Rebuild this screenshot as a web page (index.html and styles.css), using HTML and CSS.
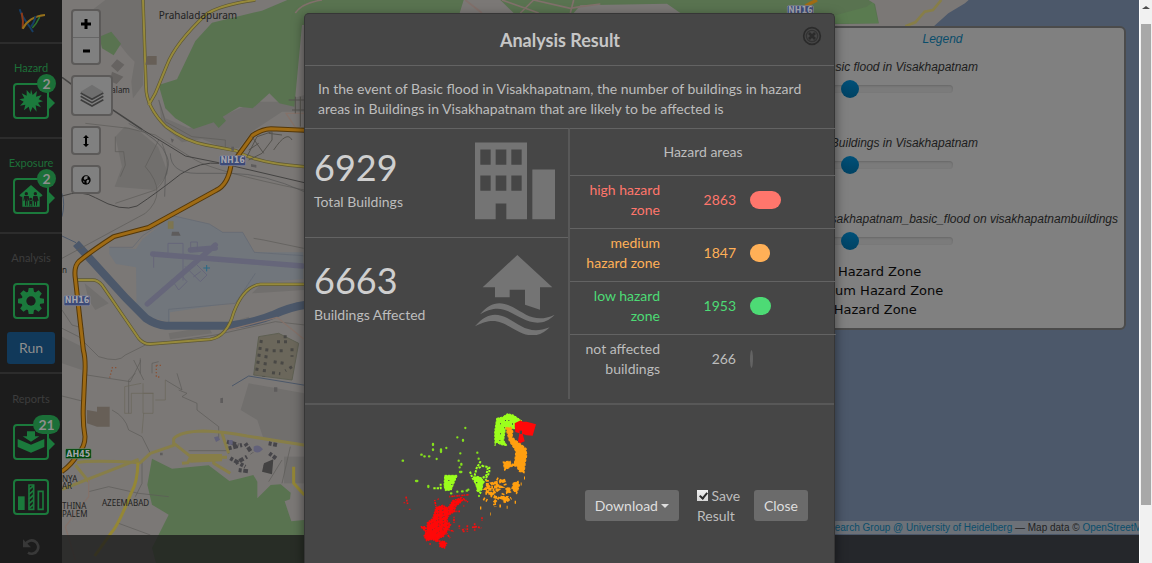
FILE: index.html
```html
<!DOCTYPE html>
<html lang="en">
<head>
<meta charset="utf-8">
<title>Analysis Result</title>
<link rel="stylesheet" href="styles.css">
</head>
<body>
<div class="app">
  <nav class="sidebar">
    <a class="brand" href="#" aria-label="Home">
      <svg width="28" height="26" viewBox="0 0 84 78" fill="none" stroke-width="6"><path d="M8 4C16 32 32 44 48 72" stroke="#163d63"/><path d="M14 14C18 30 19 46 17 62" stroke="#8d3a17"/><path d="M17 62C30 38 50 24 84 21" stroke="#95701b"/><path d="M56 24C52 40 47 50 42 56" stroke="#163d63"/><path d="M46 60C54 52 62 40 68 27" stroke="#2e7331" stroke-width="5"/></svg>
    </a>
    <section class="step">
      <h2 class="step-title on">Hazard</h2>
      <button class="tile arrow" aria-label="Hazard layers"><svg width="24" height="24" viewBox="0 0 72 72" fill="#1b7a3c"><path d="M36 1l5 17 13-12-3 17 17-5-9 13 13 6-15 4 9 14-16-6 3 19-12-14-7 16-5-17-14 11 4-17-16 3 11-12-13-7 15-3-8-15 15 7 0-17 11 12z"/></svg><span class="badge">2</span></button>
    </section>
    <section class="step">
      <h2 class="step-title on">Exposure</h2>
      <button class="tile arrow" aria-label="Exposure layers"><svg width="24" height="24" viewBox="0 0 72 72"><path fill="#1b7a3c" d="M36 3L1 34l5 4h4v30h52V38h4l5-4z"/><g fill="#1c1c1c"><circle cx="22" cy="29" r="5"/><path d="M15 36h14l3 14h-4l-2-7v22h-3V52h-2v13h-3V43l-2 7h-3z"/><circle cx="49" cy="29" r="5"/><path d="M43 36h12l4 14h-4l-1 15h-3V53h-3v12h-3l-1-15h-4z"/><circle cx="35" cy="45" r="4"/><path d="M31 50h9v17h-3v-7h-3v7h-3z"/></g></svg><span class="badge">2</span></button>
    </section>
    <section class="step analysis">
      <h2 class="step-title">Analysis</h2>
      <button class="tile" aria-label="Analysis settings"><svg width="28" height="28" viewBox="0 0 84 84"><g fill="#1b7a3c"><circle cx="42" cy="42" r="29"/><path d="M35 3h14l3 18H32zM35 81h14l3-18H32z"/><path d="M3 35v14l18 3V32zM81 35v14l-18 3V32z"/><g transform="rotate(45 42 42)"><path d="M35 3h14l3 18H32zM35 81h14l3-18H32z"/><path d="M3 35v14l18 3V32zM81 35v14l-18 3V32z"/></g></g><circle cx="42" cy="42" r="14" fill="#1c1c1c"/></svg></button>
      <button class="run">Run</button>
    </section>
    <section class="step reports">
      <h2 class="step-title">Reports</h2>
      <button class="tile arrow" aria-label="Saved reports"><svg width="28" height="24" viewBox="0 0 84 72" fill="#1b7a3c"><path d="M30 4h24v15h13L42 35 17 19h13z"/><path d="M2 27l40 17 40-17v24L42 68 2 51z"/></svg><span class="badge wide">21</span></button>
      <button class="tile" aria-label="Charts"><svg width="28" height="28" viewBox="0 0 84 84"><path fill="#1b7a3c" d="M3 40h20v41H3z"/><path fill="none" stroke="#1b7a3c" stroke-width="5" d="M36 6h14v73H36zM64 25h14v54H64z"/><path stroke="#1b7a3c" stroke-width="5" d="M36 20l14-12M36 34l14-12M36 48l14-12M36 62l14-12M36 76l14-12"/></svg></button>
      <button class="undo" aria-label="Reset"><svg width="18" height="18" viewBox="0 0 54 54"><path fill="none" stroke="#383838" stroke-width="8" d="M11 18A20 20 0 1 1 18 44"/><path fill="#383838" d="M3 4v24h24z"/></svg></button>
    </section>
  </nav>

  <main class="map">
    <svg class="tiles" viewBox="0 0 3231 1689" preserveAspectRatio="xMinYMin slice">
      <rect width="3231" height="1689" fill="#7b7876"/>
      <g fill="#716f6d">
        <path d="M130 0h113v255l-30 40-5-50 10-60-20-20-40-50-80-10-20-50z"/>
        <path d="M160 410l20 90-22 60 120 10 40-50-30-80-60-50-40-10z"/>
        <path d="M150 215l34 15-20 22-20-8zM165 178l22 16-20 22-20-18z" fill="#666361"/>
        <path d="M290 295l20 60 70 30 60-20 140-60 73 0 75-20v-30l75-30v110H660l-90 60-40 50-60-8-50-20-60 10-60-50z"/>
        <path d="M560 1150l166 30v150l-120-10-20-60-50-30z"/>
        <path d="M68 850l72 60-40 20-20-30zM0 1010l60 30v70l-60-20z"/>
        <path d="M570 880l156-10v-20H600zM320 1000l120-20 10 20-126 18zM480 975l80-25 8 14-80 22z"/>
        <path d="M666 1370h70v80h-70z"/>
      </g>
      <path fill="#597350" d="M727 0H676l-76 32-150 36-50 55-55 115-55 17 20 70 30 30 55 32 60-20 15 17 22-22-10-12 50-30 40 5 50-45 30 30 45 10z"/>
      <path fill="#597350" d="M148 95l-36 15 8 35 35 21 22-35z"/>
      <path fill="#597350" d="M270 1376l60 30 110-10 62 47 40-10 32-8 12 20v50l40-40 30-2 30 25-2 20-16 6 20 60 46-5v200H300l-30-115 50-100-50-30-14-60z"/>
      <path fill="#71767c" d="M142 742l80 5 20-30 90-70 110 25 40 25h60l35 60 147 0v80l-130 10-70 60-200 30v30l-100-25-2-140-60-10-20-30z"/>
      <path fill="none" stroke="#626873" stroke-width="2" d="M142 742l70 0 30-35 90-60 110 25 40 25h60l35 60 147 10M580 820l-60 90-200 18v50"/>
      <g fill="none" stroke="#66667a" stroke-width="16" stroke-linecap="round"><path d="M272 762l450 36M256 912L460 735M385 750l75-6"/><path stroke-width="3" d="M275 762v40M318 762v-32h45v110M386 750v-24h20v22M330 840l20 30 25-25-18-20M370 800l45 45 20-20-40-40M395 830l20-15"/></g>
      <path fill="none" stroke="#2b6a86" stroke-width="3" d="M424 804h20M434 795v19"/>
      <g fill="none" stroke="#4c586a"><path stroke-width="24" d="M42 730l150 165 60 60q30 20 60 22h190q80-10 130-32 50-24 100-31"/><path stroke-width="3" d="M0 708l42 20M0 580q10 30 0 70M510 1158l50-30 170 28"/></g>
      <g fill="none" stroke="#5c5a58" stroke-width="2">
        <path d="M70 370l130 15 80 20 120 75q60 35 327 90M290 420l-40 80q70 80 0 140L0 775M300 430q40 90-20 140l-120 40M160 410v45h25l5 40-15 35M290 300l20 65 80 45 100 10v25"/>
        <path d="M575 715l30 5 120 25M0 930l30 45 35 10M0 985l50 25 60 60q60 20 80-5l60-30 210-30 180-40 89 10M75 1125l130 20M0 1188l60 15M150 1230q40 20 50 60l40 20 25 50M205 1145l30-60 0-10M200 1240v-100l20-20M235 1080v40M270 1120v-30l20-5M215 1080l30 60M310 1140l50 30-15-50M350 1170l25 10-15 10 45 20v20l65 50v40M380 1352h120v10M240 1380v70l-20 40M80 1475l60-15 90 20 90 10M170 1570l95 35M660 1450l25-110M620 1445l40-65"/>
        <path stroke="#6a675a" d="M243 1150v90l30 0v-60h-65v60l-20 0v-80l50-10M245 1180h30M245 1240l-5 60M310 1140v60h-30"/>
      </g>
      <g fill="none" stroke="#444342"><path stroke-width="5" d="M0 232l30 22M150 328l90 60"/><path stroke-width="3" d="M240 388l130 80 100 20 257 60M0 588q60-20 100 5 80 45 125 25 60-40 130-95 60-40 120-33"/><path stroke-width="2" stroke="#555" d="M200 370q100 50 115 100 10 20-5 60l-2 60M325 460q0 60 80 60h100q100 0 222 55"/></g>
      <g fill="none" stroke-linejoin="round">
        <g stroke="#5e5834" stroke-width="10"><path d="M243 0l9 260q0 60 60 120 60 45 120 55l90 17q60 38 205 48M580 0Q470 15 430 45 340 130 315 195l-35 85-20 35"/><path d="M42 840h50q15 0 28 15l110 160q15 18 35 17l180-14q50-8 70-80 30-80 80-85h132"/></g>
        <g stroke="#978a3b" stroke-width="6"><path d="M243 0l9 260q0 60 60 120 60 45 120 55l90 17q60 38 205 48M580 0Q470 15 430 45 340 130 315 195l-35 85-20 35"/><path d="M42 840h50q15 0 28 15l110 160q15 18 35 17l180-14q50-8 70-80 30-80 80-85h132"/></g>
        <g stroke="#877e48" stroke-width="9"><path d="M45 1388q40-8 190 0l30-28 70-24 0-20q20-22 90-23 60 2 130 15l175 28M0 1468l230-90M336 1330l50 40-8 18-18 2M385 1372h110M40 1395l40 50M455 1370v20l50 30M500 1360l-20-60"/><path stroke="#948735" d="M228 1388q-2 60-20 90-40 100-60 120l-50 70M695 1400v50l32 35"/></g>
        <path fill="#877e48" d="M380 1362h100v22l-95 4z"/>
        <path stroke="#84726a" stroke-width="4" d="M500 990l145-38 80 65M80 1440v50l-70 90 30 100M672 340l30 45M670 340h57"/>
        <path stroke="#54380a" stroke-width="15" d="M727 391l-100-5q-30 2-55 20l-65 90q-10 60-45 75L260 682l-105 28Q85 755 50 785q-15 15-10 50l24 215q8 30 4 80l-4 90q-2 50 5 90 0 30-20 50-20 35-50 55"/>
        <path stroke="#9f6b14" stroke-width="9" d="M727 391l-100-5q-30 2-55 20l-65 90q-10 60-45 75L260 682l-105 28Q85 755 50 785q-15 15-10 50l24 215q8 30 4 80l-4 90q-2 50 5 90 0 30-20 50-20 35-50 55"/>
      </g>
      <path fill="#675f57" d="M75 1230l30 5v-15h38v60h-38l-30-10zM256 168h28v26h-34z"/>
      <path fill="#6b675b" stroke="#5f6053" stroke-width="3" d="M590 1010l60-10 60 30-20 110-115-15z"/>
      <g fill="none" stroke="#494845" stroke-width="9" stroke-dasharray="9 12"><path d="M598 1020l-15 100M615 1045l-10 85M645 1025h38M632 1052h36M635 1085l30 5M630 1118l25 3M690 1045v25M690 1100l-20 12M665 1010h20"/></g>
      <g fill="none" stroke="#464549" stroke-width="12" stroke-dasharray="9 5 14 7"><path d="M495 1325l35 10M500 1345l40-10M550 1330l20 30M505 1375l45 25M520 1390l35-20M530 1410l30 4M620 1330l25 5M622 1360l20 15M605 1400h25"/></g>
      <path fill="#434242" d="M606 1390l28-12-4 45-30-8z"/><path fill="#62617a" d="M456 1312l12-3 6 10-12 7zM575 1340q15-10 28 8-14 16-28 5zM500 1320h12v14h-12z"/>
      <g fill="none" stroke="#55534e" stroke-width="3"><path d="M555 470l30-60 45-15 0 25-30 40-40 20M570 410l35 50M590 430l-30 20M635 450q40-60 55-30M620 400l40 5M680 300h47M690 330h40M700 290v50M715 290v90"/></g>
      <path fill="none" stroke="#8a5237" stroke-width="4" stroke-dasharray="4 6" d="M163 1103h-12l-8 30M283 1096v35h14M283 1096h20"/>
      <path fill="#7d7550" stroke="#7d7550" d="M318 664h16v22h-16z"/><path fill="#5e5c5c" d="M330 695h20l6 12h-28zM567 492l16 3v8l-16-3zM508 440h8v12h-8zM326 415l10 4-6 10zM294 1358h8v8h-8zM475 1195l8-2v16h-8zM636 1162h10v13h-10z"/>

      <!-- strip above the dialog -->
      <path fill="#597350" d="M727 0h1480l240 0 10 70-250 5H714z"/>
      <path fill="#7b7876" d="M1205 0h110l40 39H1193zM1555 16l260-5 40 28h-320z"/>
      <path fill="none" stroke="#81706b" stroke-width="5" d="M700 39q20-30 80-39M1210 0l50 39M1320 0l110 39M1375 39l40-39 110 25 30-5 60-8M1525 39l10-39"/>
      <path fill="none" stroke="#9f6b14" stroke-width="10" d="M2230 18l35-18"/>
      <path fill="#5a7b50" d="M2304 50l110-30 20-15 15 65H2304z"/>
      <path fill="#7b7876" d="M2420 0h300v80H2304v-8h147l-12-60z"/>
      <path fill="#4c586a" d="M2720 0h511v1689H2304V80h310l45-40 50-30z"/>
      <path fill="none" stroke="#877e48" stroke-width="8" d="M2530 79l30-12 28-32 25-5 25-30"/>

      <g class="map-label" fill="#222">
        <text x="290" y="58" font-size="30">Prahaladapuram</text>
        <text x="148" y="279" font-size="24">alam</text>
        <text x="120" y="1518" font-size="24">AZEEMABAD</text>
        <text x="0" y="1445" font-size="24">NYA</text>
        <text x="0" y="1467" font-size="24">AR</text>
        <text x="0" y="1527" font-size="24">THINA</text>
        <text x="0" y="1550" font-size="24">PALEM</text>
        <text x="0" y="818" font-size="24">n</text>
      </g>
      <g class="map-shield" font-size="24">
        <g fill="#3c4a78" stroke="#8b8b99" stroke-width="2"><rect x="473" y="467" width="78" height="30" rx="4"/><rect x="6" y="887" width="78" height="30" rx="4"/><rect x="2176" y="17" width="78" height="30" rx="4"/></g>
        <rect x="10" y="1346" width="78" height="30" rx="4" fill="#00470b" stroke="#78887a" stroke-width="2"/>
        <g fill="#a3a3ab" text-anchor="middle"><text x="512" y="490">NH16</text><text x="45" y="910">NH16</text><text x="2215" y="40">NH16</text><text x="49" y="1370">AH45</text></g>
      </g>
    </svg>

    <div class="controls">
      <div class="zoom"><button aria-label="Zoom in"><svg width="12" height="12" viewBox="0 0 12 12"><path d="M1 6h10M6 1v10" stroke="#000" stroke-width="3"/></svg></button><button aria-label="Zoom out"><svg width="12" height="12" viewBox="0 0 12 12"><path d="M3 6h7" stroke="#000" stroke-width="3"/></svg></button></div>
      <button class="ctl big" aria-label="Layers"><svg width="24" height="24" viewBox="0 0 72 72"><path fill="#6f6f6f" d="M36 2l34 21-34 21L2 23z"/><path fill="none" stroke="#3d3d3d" stroke-width="5" d="M2 27l34 19 34-19M2 37l34 19 34-19M2 47l34 19 34-19"/></svg></button>
      <button class="ctl" aria-label="Fit height"><svg width="12" height="14" viewBox="0 0 12 14"><path d="M6 1l3 3H7v6h2l-3 3-3-3h2V4H3z"/></svg></button>
      <button class="ctl" aria-label="World view"><svg width="10" height="10" viewBox="0 0 30 30"><circle cx="15" cy="15" r="14"/><path fill="#808080" d="M15 3l7 2-4 4 3 4-6-1-3 4-4-5 2-6zM18 15l7-1-2 8-5 4-2-6zM5 16l6 4-2 4z"/></svg></button>
    </div>

    <aside class="legend">
      <h2><a href="#">Legend</a></h2>
      <div class="layer"><label for="l1">Basic flood in Visakhapatnam</label><input id="l1" type="range" value="44"></div>
      <div class="layer"><label for="l2">Buildings in Visakhapatnam</label><input id="l2" type="range" value="44"></div>
      <div class="layer wide"><label for="l3">visakhapatnam_basic_flood on visakhapatnambuildings</label><input id="l3" type="range" value="44"></div>
      <ul class="classes"><li>High Hazard Zone</li><li>Medium Hazard Zone</li><li>Low Hazard Zone</li></ul>
    </aside>
    <div class="attribution"><a href="#">GIScience Research Group @ University of Heidelberg</a> — Map data © <a href="#">OpenStreetMap</a></div>
    <footer class="bottom"></footer>
  </main>

  <div class="overlay">
    <div class="modal" role="dialog" aria-labelledby="title">
      <header class="modal-head">
        <h1 id="title">Analysis Result</h1>
        <button class="close-x" aria-label="Close dialog"><svg width="20" height="20" viewBox="0 0 60 60"><circle cx="30" cy="30" r="25" fill="none" stroke="#2b2b2b" stroke-width="5"/><circle cx="30" cy="30" r="17" fill="none" stroke="#333" stroke-width="4"/><path d="M21 21l18 18M39 21L21 39" stroke="#2b2b2b" stroke-width="8"/></svg></button>
      </header>
      <p class="summary">In the event of Basic flood in Visakhapatnam, the number of buildings in hazard areas in Buildings in Visakhapatnam that are likely to be affected is</p>
      <div class="results">
        <div class="totals">
          <div class="total">
            <div><strong>6929</strong><span>Total Buildings</span></div>
            <svg width="80" height="78" viewBox="525 426 240 231" fill="#747474"><path fill-rule="evenodd" d="M525 426h156v230h-62v-47h-32v47h-62zM541 447v46h31v-46zM587 447v46h32v-46zM634 447v46h31v-46zM541 525v46h31v-46zM587 525v46h32v-46zM634 525v46h31v-46z"/><path d="M697 507h68v149h-68z"/></svg>
          </div>
          <div class="total">
            <div><strong>6663</strong><span>Buildings Affected</span></div>
            <svg width="80" height="80" viewBox="525 74 240 240" fill="#747474"><path d="M652 74l105 97h-37v67l-45-15v-45h-46v23h-44v-30h-37z"/><path d="M540 252c30-36 60-42 98-22 40 22 70 50 126 23-28 30-62 30-100 10-40-20-66-45-124-11zM525 288c34-40 64-42 98-24 40 22 66 50 126 27-26 28-60 32-98 10-42-22-66-46-126-13z"/></svg>
          </div>
        </div>
        <table class="hazards">
          <colgroup><col class="c-label"><col class="c-num"><col></colgroup>
          <thead><tr><th colspan="3">Hazard areas</th></tr></thead>
          <tbody>
            <tr class="high"><th scope="row">high hazard zone</th><td>2863</td><td class="barcell"><div class="bar" style="width:31px"></div></td></tr>
            <tr class="medium"><th scope="row">medium hazard zone</th><td>1847</td><td class="barcell"><div class="bar" style="width:20px"></div></td></tr>
            <tr class="low"><th scope="row">low hazard zone</th><td>1953</td><td class="barcell"><div class="bar" style="width:21px"></div></td></tr>
            <tr class="none"><th scope="row">not affected buildings</th><td>266</td><td class="barcell"><div class="bar" style="width:3px"></div></td></tr>
          </tbody>
        </table>
      </div>
      <div class="modal-foot">
        <svg class="impact" width="180" height="163" viewBox="0 0 540 489">
          <g fill="#9bff1c" stroke="#9bff1c" stroke-width="3" stroke-dasharray="7 3">
            <path d="M350 55l18-4 14-10 18 4 26 18-20 6-3 18-26-4-6 38 10 16-18-3-15-7-3 10-1-42z"/>
            <path d="M194 226h38l-8 18-10 26-18 2-4-14z"/>
            <path d="M280 232l14-3 12 6 4 10-4 25-12 5-6-18z"/>
          </g>
          <path fill="none" stroke="#9bff1c" stroke-width="6" stroke-dasharray="7 3" d="M302 184l-12 20-8 30M306 198l18 3-5 25-20 14M328 200v18l-12 20M270 215l8 20 14 20M290 270l16 12M160 265h22v-14M296 204l14-8M308 248l12-10"/>
          <path fill="none" stroke="#84e01c" stroke-width="7" stroke-linecap="round" d="M256 84h0M232 112h0M249 120v2M159 132v3M159 148v2M183 148v8M124 164h1M133 169h1M147 169h1M170 177h0M68 182h1M108 243l4 0M145 258v3M199 144h0M241 160h0M236 182h0M244 192v2M240 216h4M292 158h0M296 176h0M232 275h0M246 274h2M260 272h1M265 269h0M297 288h0M213 280h1M239 202h0"/>
          <path fill="#464646" d="M360 70h3v3h-3zM372 82h3v3h-3zM385 60h3v3h-3zM360 100h3v3h-3zM396 70h3v4h-3zM358 120h3v3h-3zM375 60h3v3h-3zM205 240h3v3h-3zM214 252h3v3h-3zM288 246h4v4h-4zM392 95h4v5h-4z"/>
          <g fill="#ff9f10" stroke="#ff9f10" stroke-width="4" stroke-dasharray="8 4"><path d="M378 84l14-2 6 12-2 18 12 10 16 12 14 12 2 20-4 20-4 32-14-4-8-16h-14l-22 12-4-24 20-2 4 12 10-8 4-34-20-32z"/><path d="M400 250l14-6 4 12-8 24-14-14z"/><path d="M366 290h18v12l-12 4zM378 266l10-4 4 14-12 4z"/></g>
          <path fill="none" stroke="#ff9f10" stroke-width="9" stroke-dasharray="5 4 10 3" d="M350 236l16 8-26 6 20 10-30 2M336 250l-18 16 34 4-22 16 24 8-12 14 4 12M316 280h30M310 296l12 6M376 256l-6-20M370 280l-8 20M372 306l22-12M300 324h4M330 342h2M380 322h3M404 307h4M432 234h3M422 252h3M358 318h6M322 240v40"/>
          <path fill="#ff0808" d="M404 70l18-9 6 4 12 0 28 8-10 34-18-1-12-4 6 22-14 6-6-6 4-24-12-4z"/><path fill="#464646" d="M419 92h7v10h-7z"/>
          <g fill="#ff0808" stroke="#ff0808" stroke-width="4" stroke-dasharray="5 3"><path d="M168 322l20-6 16 8 14-22 24-8 2 12-16 12-6 18-14 8-8 16 12 14-10 18-12 18-12 4-6 12-14-8-18 4-8-14 8-14 2-26 16-12z"/><path d="M178 430l12-8 10 8-6 14-14-4zM122 380h14v14z"/></g>
          <path fill="none" stroke="#ff0808" stroke-width="5" stroke-dasharray="3 3 7 2" d="M208 290l60-6M236 300l24 2M244 292l20 14M174 296l2 4M250 318h3M214 334h26M222 350v20M206 390l16 4M200 400l10 14M168 412l-10 8M148 400l-12 14M164 300l4 20M170 420l20 8"/>
          <path fill="none" stroke="#ed1212" stroke-width="5" stroke-dasharray="6 3" d="M238 376v10M246 390l10-4M262 376v20M276 382l12-2 16 4M284 370v22M248 394h6M306 352v10M78 290l5 22M73 307v3M89 326v4M148 432h5"/>
          <path fill="none" stroke="#464646" stroke-width="2" stroke-dasharray="3 6 2 9" d="M150 350l40-20M150 372l50-26M156 390l50-30M170 400l38-28M190 320v80M176 330v60M206 326l-2 50M228 300l-8 30"/>
        </svg>
        <div class="actions">
          <button class="btn download">Download<i class="caret"></i></button>
          <label class="save"><input type="checkbox" checked> Save Result</label>
          <button class="btn">Close</button>
        </div>
      </div>
    </div>
  </div>
</div>
<div class="scrollbar"><i class="up"></i><div class="thumb"></div></div>
</body>
</html>
```

FILE: styles.css
```css
* { box-sizing: border-box; }
body { margin: 0; height: 100vh; display: flex; overflow: hidden; font: 14px/20px Lato, sans-serif; background: #1c1c1c; }
button { font: inherit; padding: 0; border: 0; background: none; color: inherit; }
h1, h2, p, ul { margin: 0; padding: 0; }
svg { display: block; }

.app { flex: 1; min-width: 0; position: relative; display: flex; overflow: hidden; }

/* Sidebar */
.sidebar { width: 62px; flex: none; background: #1c1c1c; display: flex; flex-direction: column; }
.brand { height: 42px; display: flex; align-items: center; justify-content: center; }
.step { border-top: 2px solid #2c2c2c; height: 95px; padding-top: 14px; display: flex; flex-direction: column; align-items: center; }
.step-title { font-size: 11px; line-height: 20px; font-weight: 400; color: #3d3d3d; margin-bottom: 5px; }
.step-title.on { color: #1d6f38; }
.tile { position: relative; width: 36px; height: 36px; flex: none; border: 2px solid #1b7a3c; border-radius: 4px; display: flex; align-items: center; justify-content: center; }
.arrow::after { content: ""; position: absolute; left: 34px; top: 12px; border: 6px solid transparent; border-left-color: #1b7a3c; border-right: 0; }
.badge { position: absolute; left: 22px; top: -11px; min-width: 19px; height: 19px; border-radius: 10px; background: #1b6f38; color: #8e8e8e; font-weight: 700; font-size: 14px; line-height: 19px; text-align: center; }
.badge.wide { left: 18px; min-width: 27px; }
.analysis { height: 140px; }
.analysis .step-title, .reports .step-title { margin-bottom: 15px; }
.run { margin-top: 13px; width: 48px; height: 32px; border-radius: 3px; background: #11395a; color: #8e8e8e; }
.reports { height: auto; flex: 1; padding-top: 15px; }
.reports .tile + .tile { margin-top: 19px; }
.undo { margin-top: 23px; }

/* Map */
.map { flex: 1; min-width: 0; position: relative; overflow: hidden; }
.tiles { position: absolute; inset: 0; width: 100%; height: 100%; }
.map-label { font-family: "Noto Sans", sans-serif; }
.map-shield { font-family: "DejaVu Sans", sans-serif; font-weight: 700; }
.bottom { position: absolute; left: 0; right: 0; bottom: 0; height: 28px; background: rgba(28, 28, 28, .8); }
.controls { position: absolute; left: 9px; top: 9px; display: flex; flex-direction: column; gap: 10px; align-items: flex-start; }
.zoom, .ctl { border: 2px solid #5c5a59; border-radius: 4px; background: #808080; }
.zoom { display: flex; flex-direction: column; }
.zoom button { width: 26px; height: 26px; display: flex; align-items: center; justify-content: center; }
.zoom button + button { border-top: 1px solid #666; }
.ctl { width: 30px; height: 29px; display: flex; align-items: center; justify-content: center; }
.ctl.big { width: 42px; height: 41px; }

.legend { position: absolute; right: 13px; top: 26px; width: 367px; padding: 1px 6px 9px; border: 2px solid #4b4b4b; border-radius: 6px; background: #808080; font: 12px/20px "Liberation Sans", sans-serif; color: #1c1c1c; }
.legend h2 { font-size: 12px; font-weight: 400; font-style: italic; text-align: center; line-height: 20px; }
.legend a, .attribution a { color: #0a4d6b; text-decoration: none; }
.layer { height: 76px; padding-top: 8px; }
.layer label { display: block; width: 211px; text-align: right; font-style: italic; white-space: nowrap; }
.layer.wide label { width: auto; }
.layer.wide { height: 61px; }
.layer input { display: block; appearance: none; width: 186px; height: 18px; margin: 3px 0 0; background: none; }
.layer input::-webkit-slider-runnable-track { height: 8px; border-radius: 4px; background: #7b7b7b; box-shadow: inset 0 1px 2px #686868; }
.layer input::-webkit-slider-thumb { appearance: none; width: 18px; height: 18px; margin-top: -5px; border-radius: 50%; background: linear-gradient(#005078, #004263); }
.classes { list-style: none; padding-left: 37px; font: 13px/19px "DejaVu Sans", sans-serif; color: #080808; }
.attribution { position: absolute; right: -14px; bottom: 29px; padding: 0 0 0 5px; font: 10px/13px "Liberation Sans", sans-serif; color: #222; background: #6c7178; white-space: nowrap; }

/* Dialog */
.overlay { position: absolute; inset: 0; display: flex; justify-content: center; align-items: stretch; padding-top: 13px; }
.modal { width: 531px; background: #464646; border: 1px solid #363636; border-bottom: 0; border-radius: 5px 5px 0 0; box-shadow: 0 4px 12px rgba(0, 0, 0, .5); color: #bdbdbd; }
.modal-head { position: relative; padding: 16px 35px 15px 16px; border-bottom: 1px solid #636363; }
.modal-head h1 { font-size: 18px; line-height: 20px; font-weight: 700; text-align: center; color: #c6c6c6; }
.close-x { position: absolute; right: 12px; top: 12px; }
.summary { padding: 13px 13px 9px; }
.results { display: grid; grid-template-columns: 265px 1fr; margin-right: -2px; }
.totals { height: 271px; border-top: 1px solid #636363; border-right: 2px solid #585858; }
.total { display: flex; justify-content: space-between; align-items: flex-start; padding: 13px 13px 16px 9px; height: 108px; }
.total + .total { border-top: 1px solid #636363; padding-top: 17px; }
.total svg { flex: none; }
.total strong { display: block; font-size: 36px; line-height: 50px; font-weight: 400; color: #cfcfcf; }
.total span { display: block; }
.hazards { width: 100%; border-collapse: collapse; table-layout: fixed; align-self: start; }
.c-label { width: 98px; }
.c-num { width: 76px; }
.hazards th, .hazards td { font-weight: 400; border-top: 1px solid #636363; text-align: right; padding: 4px 8px 8px; }
.hazards thead th { text-align: center; padding: 13px 0; }
.hazards .barcell { padding-left: 6px; }
.bar { height: 18px; border-radius: 10px; background: currentColor; }
.high { color: #ff766c; }
.medium { color: #ffb057; }
.low { color: #4ddb75; }
.none .bar { background: #636363; border-radius: 50%; }
.modal-foot { display: flex; justify-content: space-between; border-top: 2px solid #585858; margin-top: 4px; padding: 0 26px 0 75px; }
.impact { margin-top: -5px; }
.actions { display: flex; align-items: center; align-self: center; gap: 10px; padding-top: 43px; }
.btn { height: 31px; padding: 0 10px; border-radius: 3px; background: #6b6b6b; color: #dedede; }
.download { display: flex; align-items: center; gap: 3px; margin-right: 8px; }
.caret { border: 4px solid transparent; border-top-color: #dedede; border-bottom: 0; }
.save { width: 47px; }
.save input { appearance: none; width: 11px; height: 11px; margin: 0; background: #dcdcdc linear-gradient(#efefef, #d6d6d6); position: relative; }
.save input:checked::after { content: ""; position: absolute; left: 4px; top: 1px; width: 3px; height: 6px; border: solid #2b2b2b; border-width: 0 2px 2px 0; transform: rotate(40deg); }

/* Scrollbar */
.scrollbar { width: 13px; flex: none; background: #f1f1f1; border-left: 1px solid #fff; display: flex; flex-direction: column; align-items: center; padding: 6px 1px 58px; gap: 15px; }
.up { border: 4px solid transparent; border-bottom: 3px solid #4d4d4d; border-top: 0; }
.thumb { flex: 1; width: 10px; background: #a8a8a8; }
```
